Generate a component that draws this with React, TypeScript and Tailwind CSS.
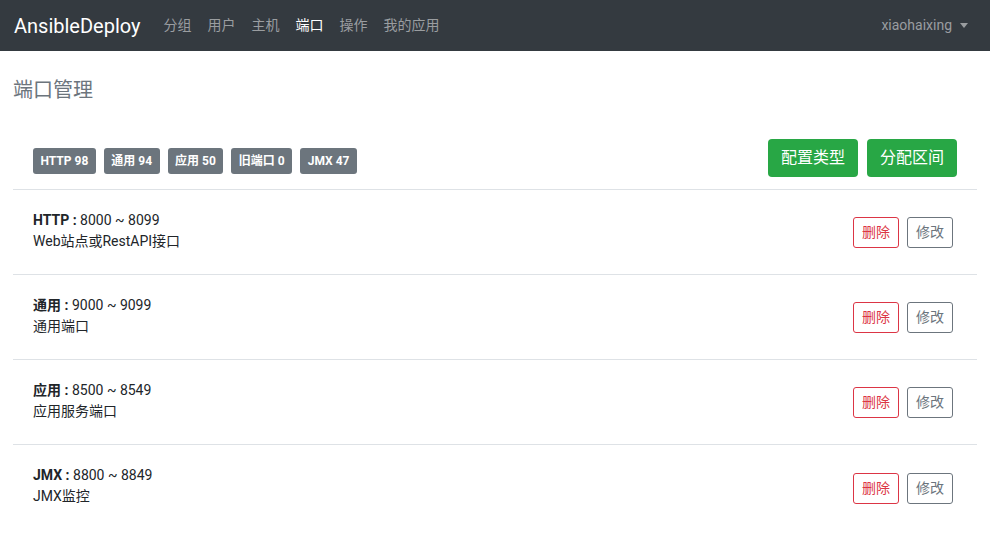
import React from 'react';

const font = { fontFamily: 'Roboto, "Noto Sans CJK SC", sans-serif' };

const stats = [
  { label: 'HTTP', count: 98 },
  { label: '通用', count: 94 },
  { label: '应用', count: 50 },
  { label: '旧端口', count: 0 },
  { label: 'JMX', count: 47 },
];

const ranges = [
  { name: 'HTTP', from: 8000, to: 8099, desc: 'Web站点或RestAPI接口' },
  { name: '通用', from: 9000, to: 9099, desc: '通用端口' },
  { name: '应用', from: 8500, to: 8549, desc: '应用服务端口' },
  { name: 'JMX', from: 8800, to: 8849, desc: 'JMX监控' },
];

const navItems = ['分组', '用户', '主机', '端口', '操作', '我的应用'];

const App: React.FC = () => {
  return (
    <div className="min-h-screen bg-white text-[#212529]" style={font}>
      <nav className="h-[51px] bg-[#343a40] flex items-center pl-[14px] pr-[22px]">
        <span className="text-white text-[20px] mr-[23px]">AnsibleDeploy</span>
        <div className="flex gap-[16px] text-[14px]">
          {navItems.map((item) => (
            <a key={item} className={item === '端口' ? 'text-white' : 'text-[#9a9da0]'}>
              {item}
            </a>
          ))}
        </div>
        <div className="ml-auto flex items-center text-[14px] text-[#9a9da0]">
          xiaohaixing
          <span className="ml-[8px] w-0 h-0 border-l-[4px] border-r-[4px] border-t-[5px] border-l-transparent border-r-transparent border-t-[#9a9da0]" />
        </div>
      </nav>

      <main className="px-[13px]">
        <h1 className="text-[20px] text-[#6c757d] pt-[27px] pb-[37px] leading-[24px]">端口管理</h1>

        <div className="flex items-center justify-between pl-[20px] pr-[20px] pb-[12px] border-b border-[#dee2e6]">
          <div className="flex gap-[8px] mt-[6px]">
            {stats.map((s) => (
              <span
                key={s.label}
                className="bg-[#6c757d] text-white text-[12px] font-bold rounded-[3px] px-[7.5px] h-[26px] flex items-center"
              >
                {s.label} {s.count}
              </span>
            ))}
          </div>
          <div className="flex gap-[9px]">
            <button className="bg-[#28a745] text-white text-[16px] rounded-[4px] h-[38px] px-[13px]">配置类型</button>
            <button className="bg-[#28a745] text-white text-[16px] rounded-[4px] h-[38px] px-[13px]">分配区间</button>
          </div>
        </div>

        {ranges.map((r, i) => (
          <div
            key={r.name}
            className={
              'flex items-center justify-between pl-[20px] pr-[24px] h-[85px] text-[14px] leading-[21px] ' +
              (i < ranges.length - 1 ? 'border-b border-[#dee2e6]' : '')
            }
          >
            <div className="pb-[3px]">
              <div>
                <b>{r.name} :</b> {r.from} ~ {r.to}
              </div>
              <div>{r.desc}</div>
            </div>
            <div className="flex gap-[8px] pt-[1px]">
              <button className="h-[31px] px-[8px] text-[14px] text-[#dc3545] border border-[#dc3545] rounded-[3px]">删除</button>
              <button className="h-[31px] px-[8px] text-[14px] text-[#6c757d] border border-[#6c757d] rounded-[3px]">修改</button>
            </div>
          </div>
        ))}
      </main>
    </div>
  );
};

export default App;
